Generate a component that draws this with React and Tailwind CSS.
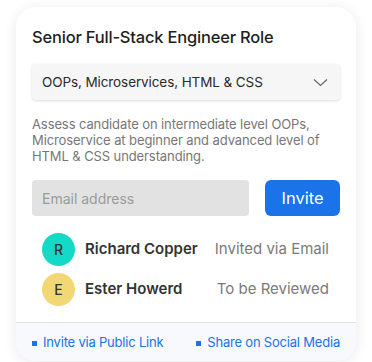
const people = [
  { initial: "R", name: "Richard Copper", status: "Invited via Email", color: "bg-[#13d9c6]" },
  { initial: "E", name: "Ester Howerd", status: "To be Reviewed", color: "bg-[#f2d874]" },
];

function App() {
  return (
    <div className="w-[372px] h-[362px] bg-white pt-[7px] px-4 font-['Inter',sans-serif] overflow-hidden">
      <div className="w-[340px] h-[354px] bg-white rounded-[20px] shadow-[0_2px_14px_rgba(0,0,0,0.09)] flex flex-col overflow-hidden">
        <div className="px-4 pt-[20px] flex-1">
          <h1 className="text-[16.5px] font-medium text-[#1f1f1f] leading-[20px] tracking-[-0.2px]">Senior Full-Stack Engineer Role</h1>
          <div className="mt-[17px] h-[36px] bg-[#f6f6f6] rounded-[4px] shadow-[0_1px_3px_rgba(0,0,0,0.14)] flex items-center justify-between pl-[10px] pr-[12px]">
            <span className="text-[13.5px] text-[#2b2b2b] tracking-[-0.1px]">OOPs, Microservices, HTML &amp; CSS</span>
            <svg width="15" height="9" viewBox="0 0 15 9" fill="none" stroke="#666" strokeWidth="1.2">
              <path d="M1 1.5 L7.5 7.5 L14 1.5" />
            </svg>
          </div>
          <p className="mt-[16px] text-[13px] leading-[16px] text-[#777] tracking-[-0.1px]">
            Assess candidate on intermediate level OOPs, Microservice at beginner and advanced level of HTML &amp; CSS understanding.
          </p>
          <div className="mt-[16px] flex gap-4">
            <div className="w-[217px] h-[36px] bg-[#e2e2e2] rounded-[4px] flex items-center pl-[10px] text-[14px] text-[#9a9a9a]">Email address</div>
            <button className="flex-1 h-[36px] bg-[#1a73e8] rounded-[6px] text-white text-[16.5px]">Invite</button>
          </div>
          <div className="mt-[17px] pl-[10px] pr-[11px] flex flex-col gap-[7px]">
            {people.map(p => (
              <div key={p.name} className="flex items-center">
                <div className={"w-[33px] h-[33px] rounded-full flex items-center justify-center text-[14px] font-medium text-[#333] " + p.color}>{p.initial}</div>
                <span className="ml-[10px] text-[15px] font-semibold text-[#333]">{p.name}</span>
                <span className="ml-auto text-[15px] text-[#7a7a7a]">{p.status}</span>
              </div>
            ))}
          </div>
        </div>
        <div className="h-[39px] pt-[2px] bg-[#f7f9fc] border-t border-[#e4e4e4] flex items-center justify-between pl-[16px] pr-[16px] text-[13px] text-[#1a73e8] tracking-[-0.2px]">
          <span className="flex items-center gap-[6px]"><span className="w-[5px] h-[5px] bg-[#1a73e8]"></span>Invite via Public Link</span>
          <span className="flex items-center gap-[6px]"><span className="w-[5px] h-[5px] bg-[#1a73e8]"></span>Share on Social Media</span>
        </div>
      </div>
    </div>
  );
}

export default App
